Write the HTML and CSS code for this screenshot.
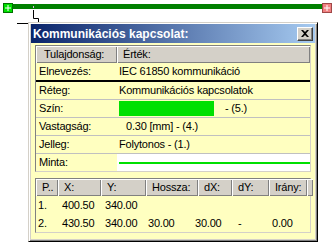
FILE: index.html
```html
<!DOCTYPE html>
<html lang="hu">

<head>
    <meta charset="UTF-8">
    <title>Kommunikációs kapcsolat</title>
    <link rel="stylesheet" href="styles.css">
</head>

<body>
    <!-- rajzlap: vonal, végpontok, kurzor -->
    <svg class="canvas" width="335" height="244" viewBox="0 0 335 244">
        <rect x="12" y="4" width="311" height="5" fill="#008000" />
        <rect x="3.5" y="3.5" width="9" height="9" fill="#00e000" stroke="#007000" />
        <path d="M5 8h6M8 5v6" stroke="#fff" stroke-width="1" />
        <rect x="322.5" y="3.5" width="9" height="9" fill="#f08080" stroke="#a04848" />
        <path d="M324 8h6M327 5v6" stroke="#fff" stroke-width="1" />
        <rect x="33" y="6" width="1" height="2" fill="#e0b0e8" />
        <path d="M33.5 10v8.5h5v4M17 23.5h12" stroke="#000" stroke-width="1" fill="none" />
    </svg>

    <!-- párbeszédablak -->
    <div class="dialog">
        <div class="titlebar">
            <span class="title">Kommunikációs kapcsolat:</span>
            <span class="close">
                <svg width="8" height="7" viewBox="0 0 8 7">
                    <path d="M0 0h2l2 2 2-2h2L5 3.5 8 7H6L4 5 2 7H0l3-3.5z" fill="#000" />
                </svg>
            </span>
        </div>

        <div class="body">
            <!-- tulajdonságok -->
            <div class="props">
                <div class="prow head">
                    <div class="hcell first">Tulajdonság:</div>
                    <div class="hcell">Érték:</div>
                </div>
                <div class="prow name">
                    <div class="pcell">Elnevezés:</div>
                    <div class="pcell val">IEC 61850 kommunikáció</div>
                </div>
                <div class="prow">
                    <div class="pcell">Réteg:</div>
                    <div class="pcell val">Kommunikációs kapcsolatok</div>
                </div>
                <div class="prow">
                    <div class="pcell">Szín:</div>
                    <div class="pcell val color"><span class="swatch"></span><span>- (5.)</span></div>
                </div>
                <div class="prow">
                    <div class="pcell">Vastagság:</div>
                    <div class="pcell val indent">0.30 [mm] - (4.)</div>
                </div>
                <div class="prow">
                    <div class="pcell">Jelleg:</div>
                    <div class="pcell val">Folytonos - (1.)</div>
                </div>
                <div class="prow last">
                    <div class="pcell">Minta:</div>
                    <div class="pcell sample"><span class="sample-line"></span></div>
                </div>
            </div>

            <!-- pontok -->
            <div class="points">
                <div class="grow head">
                    <div class="hcell">P..</div>
                    <div class="hcell">X:</div>
                    <div class="hcell">Y:</div>
                    <div class="hcell">Hossza:</div>
                    <div class="hcell">dX:</div>
                    <div class="hcell">dY:</div>
                    <div class="hcell">Irány:</div>
                    <div class="hcell"></div>
                </div>
                <div class="grow data">
                    <div>1.</div>
                    <div>400.50</div>
                    <div>340.00</div>
                    <div></div>
                    <div></div>
                    <div></div>
                    <div></div>
                </div>
                <div class="grow data">
                    <div>2.</div>
                    <div>430.50</div>
                    <div>340.00</div>
                    <div>30.00</div>
                    <div>30.00</div>
                    <div>-</div>
                    <div>0.00</div>
                </div>
            </div>
        </div>
    </div>
</body>

</html>
```

FILE: styles.css
```css
* {
    margin: 0;
    padding: 0;
    box-sizing: border-box;
}

body {
    width: 335px;
    height: 244px;
    background-color: #fff;
    font-family: "Liberation Sans", Arial, sans-serif;
    font-size: 11px;
    letter-spacing: -0.2px;
    color: #000;
    position: relative;
    overflow: hidden;
}

/* rajzlap */
.canvas {
    position: absolute;
    left: 0;
    top: 0;
}

/* ablak */
.dialog {
    position: absolute;
    left: 28px;
    top: 22px;
    width: 290px;
    height: 220px;
    display: flex;
    flex-direction: column;
    padding: 1px 2px 2px 2px;
    background-color: #d4d0c8;
    border: 1px solid;
    border-color: #d4d0c8 #000 #000 #d4d0c8;
    box-shadow: inset 1px 1px #fff, inset -1px -1px #808080;
}

/* címsor */
.titlebar {
    height: 19px;
    display: flex;
    align-items: center;
    justify-content: space-between;
    padding: 0 2px 0 2px;
    background: linear-gradient(to right, #0a246a, #a6caf0);
}

.title {
    font-family: "Liberation Sans", Arial, sans-serif;
    font-weight: bold;
    font-size: 12px;
    letter-spacing: 0;
    color: #fff;
}

.close {
    width: 16px;
    height: 14px;
    display: flex;
    align-items: center;
    justify-content: center;
    background-color: #d4d0c8;
    border: 1px solid;
    border-color: #fff #404040 #404040 #fff;
    box-shadow: inset -1px -1px #808080;
}

/* tartalom */
.body {
    flex: 1;
    display: flex;
    flex-direction: column;
    gap: 6px;
    padding: 2px 4px 0 4px;
    background-color: #ffffc0;
}

.props,
.points {
    border: 1px solid;
    border-color: #808080 #d4d0c8 #d4d0c8 #808080;
    background-color: #ffffc0;
}

/* fejléc cellák */
.hcell {
    height: 17px;
    line-height: 17px;
    padding-left: 6px;
    background-color: #d4d0c8;
    box-shadow: inset 1px 1px #fff, inset -1px -1px #808080;
    white-space: nowrap;
    overflow: hidden;
}

.hcell.first {
    padding-left: 8px;
}

/* tulajdonság tábla */
.prow {
    display: grid;
    grid-template-columns: 81px 1fr;
    height: 18px;
    border-bottom: 1px solid #c0c0c0;
}

.prow.head {
    height: 17px;
    border-bottom: none;
}

.prow.name {
    height: 19px;
    border-bottom: 2px solid #000;
}

.prow.last {
    height: 17px;
    border-bottom: none;
}

.pcell {
    line-height: 17px;
    padding-left: 3px;
    white-space: nowrap;
    overflow: hidden;
}

.pcell.val {
    padding-left: 2px;
}

.pcell.indent {
    padding-left: 9px;
}

.color {
    display: flex;
    align-items: flex-start;
}

.swatch {
    width: 95px;
    height: 15px;
    margin-top: 1px;
    margin-right: 11px;
    background-color: #00e000;
}

.sample {
    background-color: #fff;
    padding: 8px 0 0 2px;
}

.sample-line {
    display: block;
    height: 2px;
    background-color: #00e000;
}

/* pont tábla */
.grow {
    display: grid;
}

.grow.head {
    grid-template-columns: 22px 43px 45px 52px 34px 37px 38px 1fr;
}

.grow.data {
    grid-template-columns: 24px 43px 43px 47px 43px 34px 1fr;
    height: 18px;
    line-height: 18px;
}

.grow.data div {
    padding-left: 2px;
    white-space: nowrap;
}
```
